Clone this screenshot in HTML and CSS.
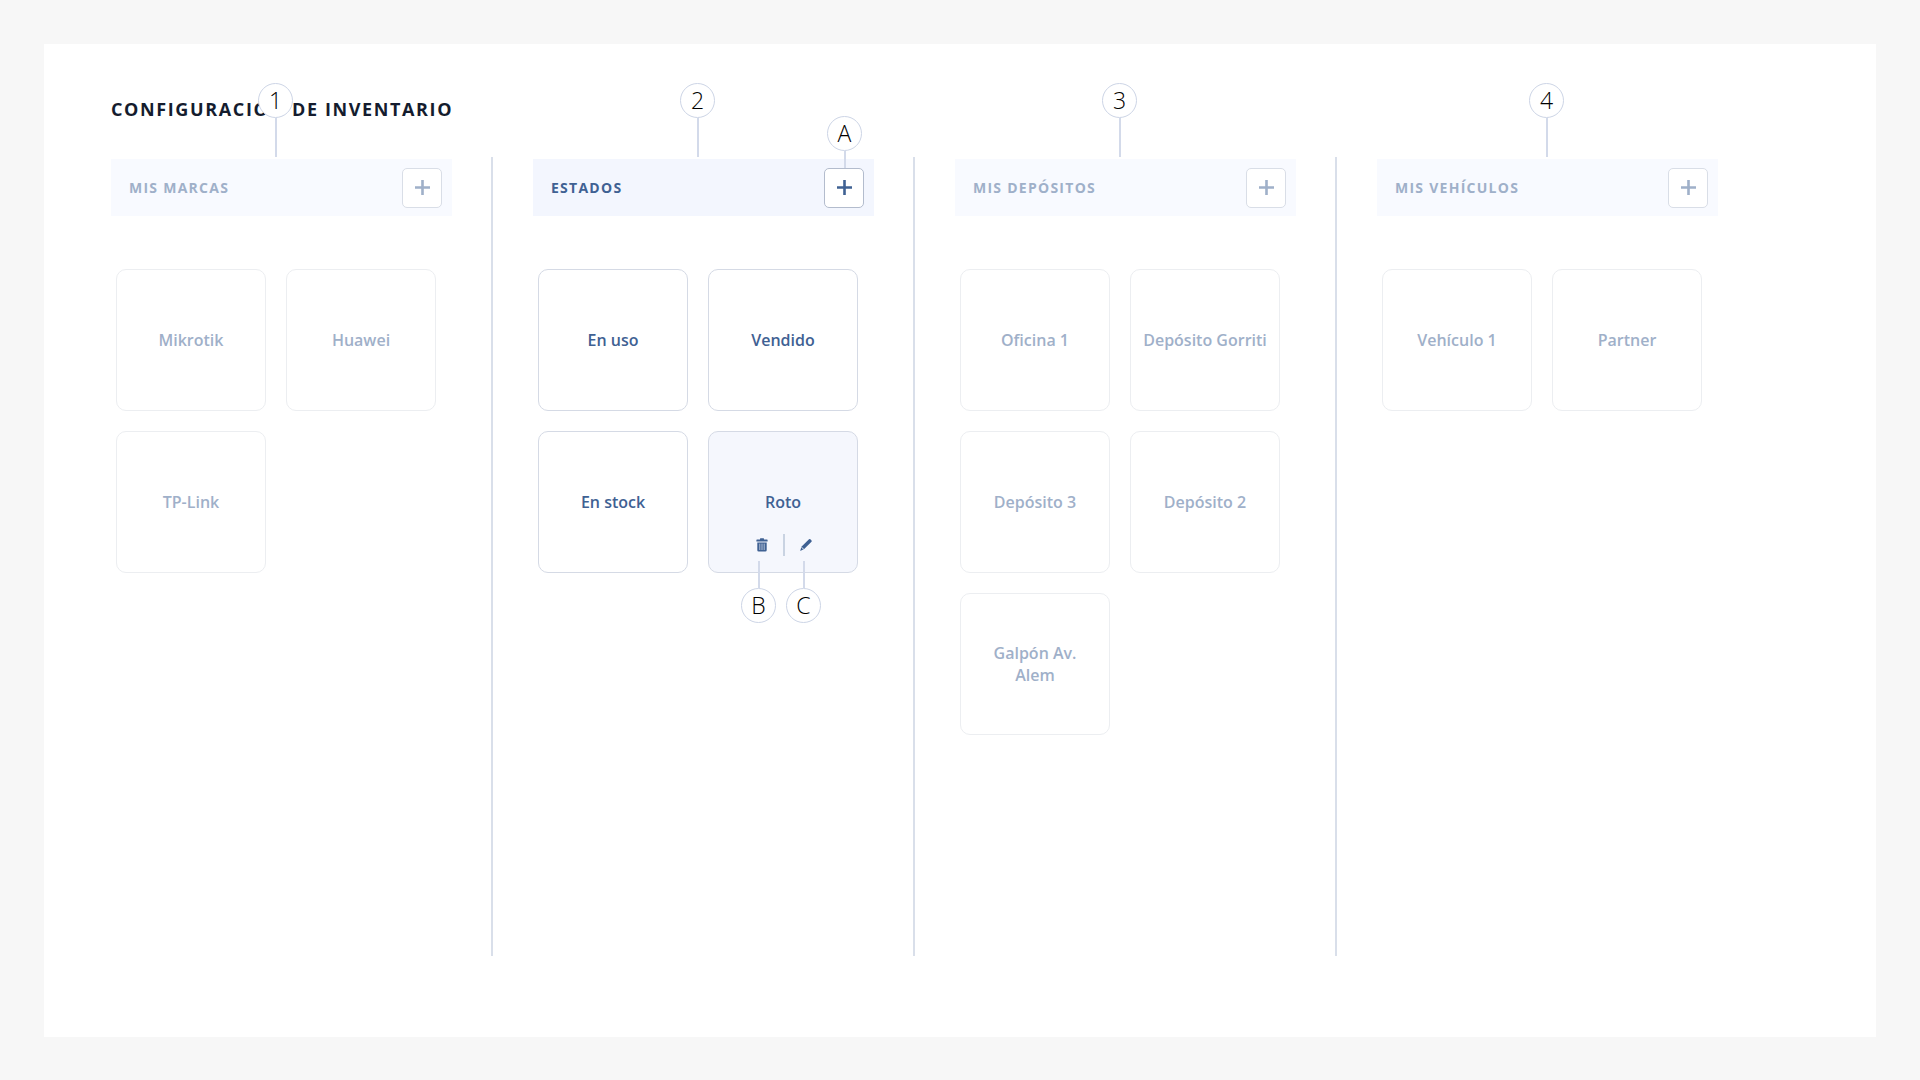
FILE: index.html
```html
<!DOCTYPE html>
<html lang="es">
<head>
<meta charset="utf-8">
<meta name="viewport" content="width=device-width, initial-scale=1">
<title>Configuración de inventario</title>
<link rel="stylesheet" href="styles.css">
</head>
<body>
<svg class="sprite" aria-hidden="true">
  <symbol id="plus" viewBox="0 0 15 15"><path d="M7.500 0V15M0 7.500H15" fill="none" stroke="currentColor" stroke-width="2.600"/></symbol>
  <symbol id="trash" viewBox="0 0 12 14">
    <path d="M4 1.500V.8Q4 .2 4.600 .2H7.400Q8 .2 8 .8V1.500H11Q11.600 1.500 11.600 2.100V3.600H.4V2.100Q.4 1.500 1 1.500ZM1.300 4.400H10.700V12.200Q10.700 13.600 9.300 13.600H2.700Q1.300 13.600 1.300 12.200Z" fill="currentColor"/>
    <path d="M3.800 5.600V12M6 5.600V12M8.200 5.600V12" fill="none" stroke="#f5f7fd" stroke-width=".8" stroke-opacity=".8"/>
  </symbol>
  <symbol id="pencil" viewBox="0 0 12 14">
    <path d="M9 1.300Q9.700 .7 10.400 1.300L11.500 2.400Q12.100 3.100 11.500 3.700L4.200 11L.2 13L1.400 8.800Z" fill="currentColor"/>
    <path d="M1.600 9.200L3.800 11.400" fill="none" stroke="#f5f7fd" stroke-width="1"/>
  </symbol>
</svg>
<main class="panel">
  <h1 class="title">CONFIGURACIÓN DE INVENTARIO</h1>
  <div class="board">
    <section class="column">
      <span class="callout callout-column">1</span>
      <header class="column-head"><h2>MIS MARCAS</h2><button class="add" aria-label="Agregar marca"><svg><use href="#plus"/></svg></button></header>
      <ul class="cards">
        <li class="card"><span>Mikrotik</span></li>
        <li class="card"><span>Huawei</span></li>
        <li class="card"><span>TP-Link</span></li>
      </ul>
    </section>
    <div class="divider"></div>
    <section class="column active">
      <span class="callout callout-column">2</span>
      <header class="column-head"><h2>ESTADOS</h2><button class="add" aria-label="Agregar estado"><svg><use href="#plus"/></svg><span class="callout callout-add">A</span></button></header>
      <ul class="cards">
        <li class="card"><span>En uso</span></li>
        <li class="card"><span>Vendido</span></li>
        <li class="card"><span>En stock</span></li>
        <li class="card selected"><span>Roto</span>
          <div class="actions">
            <button class="action" aria-label="Eliminar"><svg><use href="#trash"/></svg><span class="callout callout-action">B</span></button>
            <button class="action" aria-label="Editar"><svg><use href="#pencil"/></svg><span class="callout callout-action">C</span></button>
          </div>
        </li>
      </ul>
    </section>
    <div class="divider"></div>
    <section class="column">
      <span class="callout callout-column">3</span>
      <header class="column-head"><h2>MIS DEPÓSITOS</h2><button class="add" aria-label="Agregar depósito"><svg><use href="#plus"/></svg></button></header>
      <ul class="cards">
        <li class="card"><span>Oficina 1</span></li>
        <li class="card"><span>Depósito Gorriti</span></li>
        <li class="card"><span>Depósito 3</span></li>
        <li class="card"><span>Depósito 2</span></li>
        <li class="card"><span>Galpón Av.<br>Alem</span></li>
      </ul>
    </section>
    <div class="divider"></div>
    <section class="column">
      <span class="callout callout-column callout-last">4</span>
      <header class="column-head"><h2>MIS VEHÍCULOS</h2><button class="add" aria-label="Agregar vehículo"><svg><use href="#plus"/></svg></button></header>
      <ul class="cards">
        <li class="card"><span>Vehículo 1</span></li>
        <li class="card"><span>Partner</span></li>
      </ul>
    </section>
  </div>
</main>
</body>
</html>
```
FILE: styles.css
```css
* { box-sizing: border-box; }

body {
  margin: 0;
  padding: 44px 44px 43px;
  min-height: 100vh;
  display: flex;
  background: #f7f7f7;
  font-family: "Open Sans", "Noto Sans", sans-serif;
  color: #141c2e;
}

.sprite { position: absolute; width: 0; height: 0; }

button { font: inherit; padding: 0; cursor: pointer; }

.panel {
  flex: 1;
  min-width: 0;
  padding: 53px 67px 80px;
  background: #fff;
}

.title {
  margin: 0 0 36px;
  font-size: 18px;
  line-height: 24px;
  font-weight: 700;
  letter-spacing: 0.09em;
}

.board { display: flex; min-height: 799px; }

.column {
  --ink: #9fb0c9;
  --head: #f8faff;
  --card-line: #eceef1;
  --button-line: #d9dee7;
  position: relative;
  flex: 0 1 341px;
  min-width: 0;
  padding-top: 2px;
  color: var(--ink);
}

.column.active {
  --ink: #3f6193;
  --head: #f3f6fe;
  --card-line: #d5dae5;
  --button-line: #b3bccd;
}

.divider {
  flex: none;
  width: 2px;
  margin: 0 40px 0 39px;
  background: #d9dfea;
}

.column-head {
  display: flex;
  align-items: center;
  justify-content: space-between;
  height: 57px;
  padding: 0 10px 0 18px;
  background: var(--head);
}

.column-head h2 {
  margin: 0;
  font-size: 14px;
  line-height: 20px;
  font-weight: 700;
  letter-spacing: 0.09em;
}

.add {
  position: relative;
  display: grid;
  place-items: center;
  width: 40px;
  height: 40px;
  border: 1px solid var(--button-line);
  border-radius: 5px;
  background: #fff;
  color: var(--ink);
}

.add svg { width: 15px; height: 15px; }

.cards {
  display: grid;
  grid-template-columns: repeat(2, minmax(0, 150px));
  grid-auto-rows: 142px;
  gap: 20px;
  margin: 53px 0 0;
  padding: 0 5px;
  list-style: none;
}

.card {
  display: grid;
  grid-template-rows: 1fr auto 1fr;
  justify-items: center;
  border: 1px solid var(--card-line);
  border-radius: 10px;
  font-size: 16px;
  line-height: 22px;
  font-weight: 600;
  text-align: center;
}

.card > span { grid-row: 2; }

.selected { background: #f5f7fd; }

.actions {
  grid-row: 3;
  align-self: center;
  display: flex;
  height: 22px;
  margin-top: 4px;
}

.action {
  position: relative;
  display: grid;
  place-items: center;
  width: 43px;
  border: 0;
  background: none;
  color: var(--ink);
}

.action + .action { border-left: 2px solid #c9d3e2; }

.action svg { width: 12px; height: 14px; }

/* Numbered markers: a circle with a leader line */
.callout {
  position: absolute;
  z-index: 1;
  width: 35px;
  height: 35px;
  border: 1px solid #cdd5e6;
  border-radius: 50%;
  background: #fff;
  color: #000;
  font-size: 23px;
  line-height: 32px;
  font-weight: 300;
  text-align: center;
}

.callout::after {
  content: "";
  position: absolute;
  left: 16px;
  width: 2px;
  background: #d3daea;
}

.callout-column { top: -74px; left: 147px; }
.callout-column::after { top: 34px; height: 39px; }
.callout-last { left: 152px; }

.callout-add { top: -53px; left: 2px; }
.callout-add::after { top: 34px; height: 17px; }

.callout-action { top: 54px; left: 1px; }
.callout-action::after { bottom: 34px; height: 27px; }
```
